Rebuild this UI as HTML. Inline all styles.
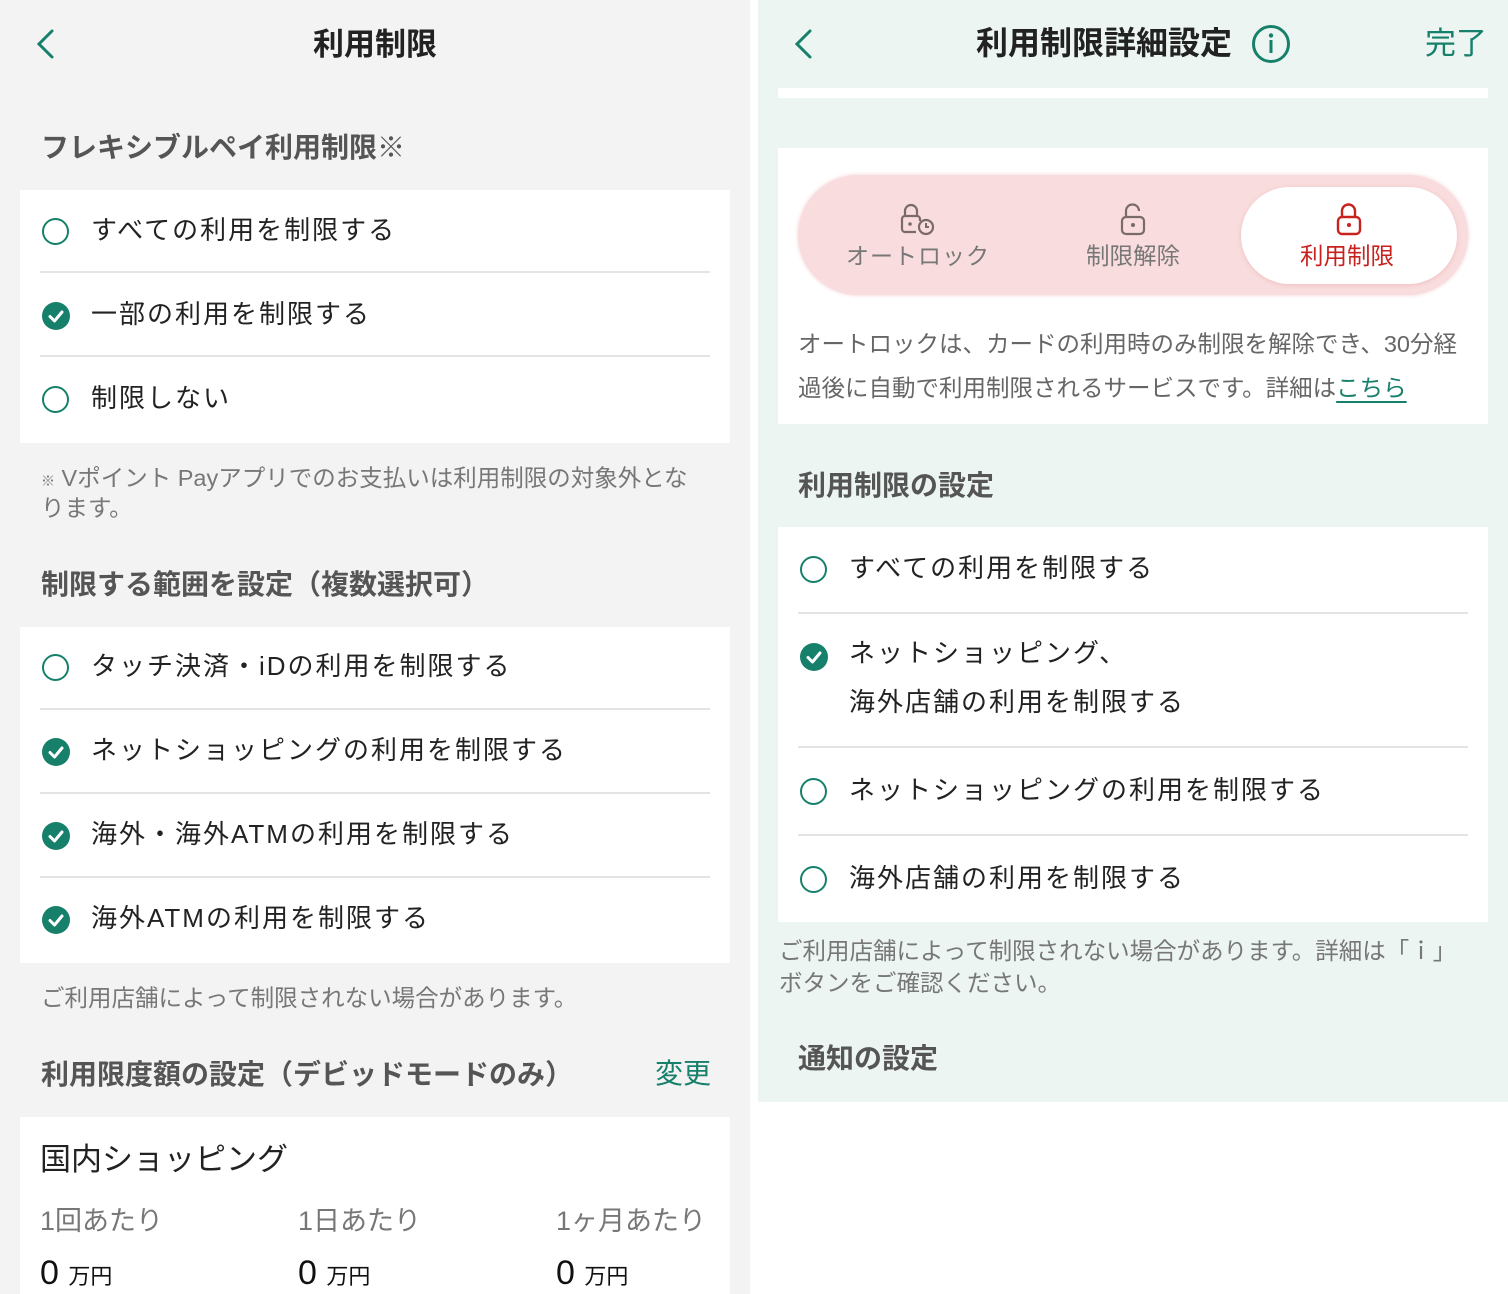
<!DOCTYPE html>
<html><head><meta charset="utf-8"><style>
*{margin:0;padding:0;box-sizing:border-box}
body{width:1508px;height:1294px;position:relative;overflow:hidden;background:#fff;font-family:"Liberation Sans","Noto Sans CJK JP",sans-serif;color:#222}
.a{position:absolute;white-space:nowrap;line-height:1}
.bg{position:absolute}
.w{position:absolute;background:#fff}
.hd{font-weight:bold;font-size:28px;color:#555}
.t{font-size:26px;letter-spacing:2px;color:#222}
.n{font-size:23.5px;color:#777}
.dv{position:absolute;height:2px;background:#e4e4e4}
.r{position:absolute;width:27px;height:27px;border-radius:50%;border:2.5px solid #17806a}
.c{position:absolute;width:28px;height:28px;border-radius:50%;background:#17806a}
.c svg{position:absolute;left:0;top:0}
.g{color:#17806a}
</style></head><body>
<!-- LEFT -->
<div class="bg" style="left:0;top:0;width:750px;height:1294px;background:#f3f3f3"></div>
<svg class="bg" style="left:33px;top:28px" width="24" height="32"><path d="M19 3 L6 16 L19 29" stroke="#17806a" stroke-width="3" fill="none" stroke-linecap="round"/></svg>
<div class="a" style="left:0;width:750px;text-align:center;top:29px;font-size:31px;font-weight:bold;color:#222">利用制限</div>
<div class="a hd" style="left:41px;top:134px">フレキシブルペイ利用制限※</div>
<div class="w" style="left:20px;top:190px;width:710px;height:253px"></div>
<div class="dv" style="left:40px;top:271px;width:670px"></div>
<div class="dv" style="left:40px;top:355px;width:670px"></div>
<div class="r" style="left:42px;top:218px"></div>
<div class="a t" style="left:91px;top:217px">すべての利用を制限する</div>
<div class="c" style="left:42px;top:302px"><svg width="28" height="28"><path d="M8 14.5 L12.5 19 L20 10" stroke="#fff" stroke-width="3" fill="none" stroke-linecap="round" stroke-linejoin="round"/></svg></div>
<div class="a t" style="left:91px;top:301px">一部の利用を制限する</div>
<div class="r" style="left:42px;top:386px"></div>
<div class="a t" style="left:91px;top:385px">制限しない</div>
<div class="a n" style="left:41px;top:467px"><span style="font-size:14px">※</span> Vポイント Payアプリでのお支払いは利用制限の対象外とな</div>
<div class="a n" style="left:41px;top:497px">ります。</div>
<div class="a hd" style="left:41px;top:571px">制限する範囲を設定（複数選択可）</div>
<div class="w" style="left:20px;top:627px;width:710px;height:336px"></div>
<div class="dv" style="left:40px;top:708px;width:670px"></div>
<div class="dv" style="left:40px;top:792px;width:670px"></div>
<div class="dv" style="left:40px;top:876px;width:670px"></div>
<div class="r" style="left:42px;top:654px"></div>
<div class="a t" style="left:91px;top:653px">タッチ決済・iDの利用を制限する</div>
<div class="c" style="left:42px;top:738px"><svg width="28" height="28"><path d="M8 14.5 L12.5 19 L20 10" stroke="#fff" stroke-width="3" fill="none" stroke-linecap="round" stroke-linejoin="round"/></svg></div>
<div class="a t" style="left:91px;top:737px">ネットショッピングの利用を制限する</div>
<div class="c" style="left:42px;top:822px"><svg width="28" height="28"><path d="M8 14.5 L12.5 19 L20 10" stroke="#fff" stroke-width="3" fill="none" stroke-linecap="round" stroke-linejoin="round"/></svg></div>
<div class="a t" style="left:91px;top:821px">海外・海外ATMの利用を制限する</div>
<div class="c" style="left:42px;top:906px"><svg width="28" height="28"><path d="M8 14.5 L12.5 19 L20 10" stroke="#fff" stroke-width="3" fill="none" stroke-linecap="round" stroke-linejoin="round"/></svg></div>
<div class="a t" style="left:91px;top:905px">海外ATMの利用を制限する</div>
<div class="a n" style="left:41px;top:987px">ご利用店舗によって制限されない場合があります。</div>
<div class="a hd" style="left:41px;top:1061px">利用限度額の設定（デビッドモードのみ）</div>
<div class="a g" style="left:655px;top:1060px;font-size:28px">変更</div>
<div class="w" style="left:20px;top:1117px;width:710px;height:177px"></div>
<div class="a" style="left:40px;top:1144px;font-size:31px;color:#222">国内ショッピング</div>
<div class="a" style="left:40px;top:1208px;font-size:27px;color:#777">1回あたり</div>
<div class="a" style="left:298px;top:1208px;font-size:27px;color:#777">1日あたり</div>
<div class="a" style="left:556px;top:1208px;font-size:27px;color:#777">1ヶ月あたり</div>
<div class="a" style="left:40px;top:1256px;font-size:34px;color:#111">0 <span style="font-size:22px">万円</span></div>
<div class="a" style="left:298px;top:1256px;font-size:34px;color:#111">0 <span style="font-size:22px">万円</span></div>
<div class="a" style="left:556px;top:1256px;font-size:34px;color:#111">0 <span style="font-size:22px">万円</span></div>

<!-- RIGHT -->
<div class="bg" style="left:758px;top:0;width:750px;height:1102px;background:#ecf5f2"></div>
<svg class="bg" style="left:791px;top:28px" width="24" height="32"><path d="M19 3 L6 16 L19 29" stroke="#17806a" stroke-width="3" fill="none" stroke-linecap="round"/></svg>
<div class="a" style="left:976px;top:27px;font-size:32px;font-weight:bold;color:#222">利用制限詳細設定</div>
<svg class="bg" style="left:1251px;top:23px" width="40" height="42"><circle cx="20" cy="21" r="17.5" stroke="#17806a" stroke-width="3" fill="none"/><circle cx="20" cy="12.5" r="2.2" fill="#17806a"/><rect x="18.5" y="17" width="3" height="13" fill="#17806a"/></svg>
<div class="a g" style="left:1425px;top:28px;font-size:31px">完了</div>
<div class="w" style="left:778px;top:88px;width:710px;height:10px"></div>
<div class="w" style="left:778px;top:148px;width:710px;height:276px"></div>
<div class="bg" style="left:798px;top:175px;width:670px;height:120px;border-radius:60px;background:#f9dcdd;box-shadow:0 0 4px #f3cfd0"></div>
<div class="bg" style="left:1241px;top:187px;width:216px;height:97px;border-radius:49px;background:#fff;box-shadow:0 1px 4px rgba(220,150,150,.4)"></div>
<svg class="bg" style="left:898px;top:202px" width="40" height="36"><path d="M7 14 V9 a6 6 0 0 1 12 0 V14" stroke="#7a6a6a" stroke-width="2.2" fill="none"/><path d="M18 30 H7 a3 3 0 0 1 -3 -3 V17 a3 3 0 0 1 3 -3 H19 a3 3 0 0 1 3 3 V19" stroke="#7a6a6a" stroke-width="2.2" fill="none"/><circle cx="12" cy="22" r="1.8" fill="#7a6a6a"/><circle cx="28" cy="25" r="7" stroke="#7a6a6a" stroke-width="2.2" fill="none"/><path d="M28 21 V25 H31" stroke="#7a6a6a" stroke-width="2" fill="none"/></svg>
<div class="a" style="left:846px;top:245px;font-size:23px;color:#777;letter-spacing:1px">オートロック</div>
<svg class="bg" style="left:1118px;top:202px" width="30" height="36"><path d="M8 15 V9 a6.5 6.5 0 0 1 13 0" stroke="#7a6a6a" stroke-width="2.2" fill="none"/><rect x="4" y="15" width="22" height="17" rx="4" stroke="#7a6a6a" stroke-width="2.2" fill="none"/><circle cx="15" cy="23" r="2" fill="#7a6a6a"/></svg>
<div class="a" style="left:1086px;top:245px;font-size:23.5px;color:#777">制限解除</div>
<svg class="bg" style="left:1334px;top:202px" width="30" height="36"><path d="M8 15 V9 a6.5 6.5 0 0 1 13 0 V15" stroke="#c8221f" stroke-width="2.4" fill="none"/><rect x="4" y="15" width="22" height="17" rx="4" stroke="#c8221f" stroke-width="2.4" fill="none"/><circle cx="15" cy="23" r="2" fill="#c8221f"/></svg>
<div class="a" style="left:1300px;top:245px;font-size:23.5px;color:#c8221f">利用制限</div>
<div class="a" style="left:798px;top:333px;font-size:23.5px;color:#666">オートロックは、カードの利用時のみ制限を解除でき、30分経</div>
<div class="a" style="left:798px;top:377px;font-size:23.5px;color:#666">過後に自動で利用制限されるサービスです。詳細は<span class="g" style="text-decoration:underline;text-underline-offset:5px">こちら</span></div>
<div class="a hd" style="left:798px;top:472px">利用制限の設定</div>
<div class="w" style="left:778px;top:527px;width:710px;height:395px"></div>
<div class="dv" style="left:798px;top:612px;width:670px"></div>
<div class="dv" style="left:798px;top:746px;width:670px"></div>
<div class="dv" style="left:798px;top:834px;width:670px"></div>
<div class="r" style="left:800px;top:556px"></div>
<div class="a t" style="left:849px;top:555px">すべての利用を制限する</div>
<div class="c" style="left:800px;top:643px"><svg width="28" height="28"><path d="M8 14.5 L12.5 19 L20 10" stroke="#fff" stroke-width="3" fill="none" stroke-linecap="round" stroke-linejoin="round"/></svg></div>
<div class="a t" style="left:849px;top:640px">ネットショッピング、</div>
<div class="a t" style="left:849px;top:689px">海外店舗の利用を制限する</div>
<div class="r" style="left:800px;top:778px"></div>
<div class="a t" style="left:849px;top:777px">ネットショッピングの利用を制限する</div>
<div class="r" style="left:800px;top:866px"></div>
<div class="a t" style="left:849px;top:865px">海外店舗の利用を制限する</div>
<div class="a n" style="left:779px;top:940px">ご利用店舗によって制限されない場合があります。詳細は「ｉ」</div>
<div class="a n" style="left:779px;top:972px">ボタンをご確認ください。</div>
<div class="a hd" style="left:798px;top:1045px">通知の設定</div>
</body></html>
